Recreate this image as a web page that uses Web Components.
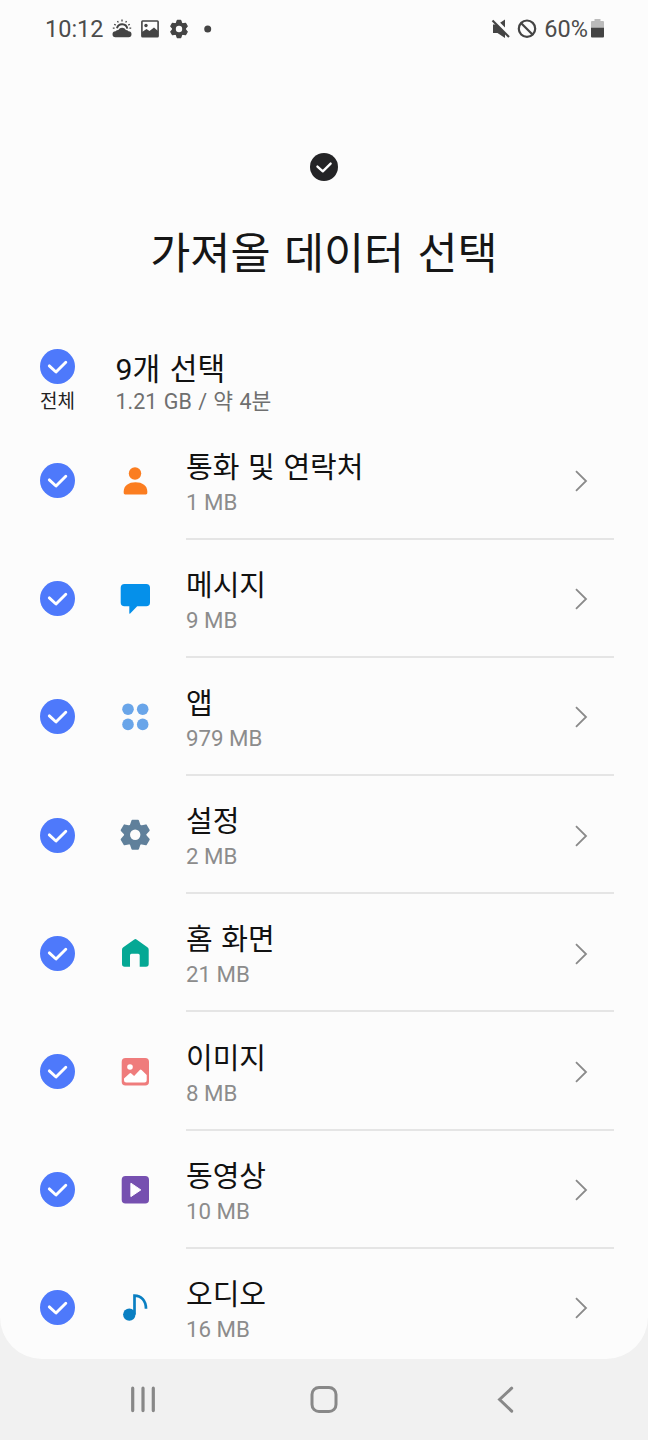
<!DOCTYPE html>
<html lang="ko">
<head>
<meta charset="utf-8">
<title>가져올 데이터 선택</title>
<style>
html, body { margin: 0; height: 100%; }
body { background: #f1f1f1; font-family: Roboto, "Noto Sans CJK KR", sans-serif; font-weight: 400; overflow: hidden; }
</style>
</head>
<body>
<transfer-screen></transfer-screen>
<script>
function define(name, render) {
  customElements.define(name, class extends HTMLElement {
    connectedCallback() {
      if (this.shadowRoot) return;
      this.attachShadow({ mode: 'open' }).innerHTML = render(this);
    }
  });
}

// Six-tooth gear centred on the origin, 30 units tall.
const TOOTH = 'M-2.800-14h5.600l1.700 5v18l-1.700 5h-5.600l-1.700-5v-18z';
const gear = color => `<g fill="${color}" stroke="${color}" stroke-width="2" stroke-linejoin="round"><circle r="10"/>
<path d="${TOOTH}"/><path d="${TOOTH}" transform="rotate(60)"/><path d="${TOOTH}" transform="rotate(120)"/></g><circle r="5.200" fill="#fcfcfc"/>`;

const ICONS = {
  contacts: '<g fill="#fb7d20"><circle cx="18" cy="10.5" r="6.2"/><path d="M6.7 30v-1.6C6.7 22.600 11.600 19.200 18.500 19.200S30.300 22.600 30.300 28.400V30q0 1.400-1.500 1.400H8.200q-1.500 0-1.500-1.400z"/></g>',
  messages: '<path fill="#0590ea" d="M7.500 3h21.700q3.800 0 3.800 3.800v14.700q0 3.800-3.800 3.800H20.200l-7 7.100q-.9.700-.9-.5v-6.600H7.500q-3.800 0-3.800-3.800V6.800Q3.700 3 7.500 3z"/>',
  apps: '<g fill="#69a5e9"><circle cx="11" cy="10.200" r="5.800"/><circle cx="25.700" cy="10.200" r="5.800"/><circle cx="11" cy="25.400" r="5.800"/><circle cx="25.700" cy="25.400" r="5.800"/></g>',
  settings: '<g transform="translate(18.200 17.800)">' + gear('#60809b') + '</g>',
  home: '<path fill="#05a894" d="M17.300 4.500q1.100-.8 2.200 0L30.400 12.200q1.300.9 1.300 2.500V29q0 2.700-2.700 2.700h-6.300V20.200q0-1.500-1.500-1.500h-6.700q-1.500 0-1.500 1.500v11.500H7.700Q5 31.700 5 29V14.700q0-1.600 1.300-2.500z"/>',
  images: '<rect x="4.700" y="4.100" width="27.300" height="27.500" rx="3.800" fill="#ef7c7c"/><circle cx="13" cy="13" r="2.800" fill="#fff"/><path fill="#fff" d="M7 24.500l5.500-5q.9-.8 1.800 0l2.800 2.500 5.700-6q.9-.9 1.800 0l5.100 4.900v5.300q0 2.200-2.200 2.200H9.200Q7 28.400 7 26.200z"/>',
  video: '<rect x="4.700" y="4.100" width="27.300" height="27.500" rx="3.800" fill="#7650b0"/><path fill="#fff" stroke="#fff" stroke-linejoin="round" d="M13.900 11.200v13.400l9.900-6.700z"/>',
  audio: '<circle cx="12.300" cy="24.600" r="6.200" fill="#0a7fc2"/><path fill="none" stroke="#0a7fc2" stroke-width="2.700" d="M17.500 24.600V5.600c6.700 0 11.500 4.800 11.500 13.200"/>'
};

define('category-icon', el => `
<style>:host{display:block;width:36px;height:36px} svg{display:block}</style>
<svg width="36" height="36" viewBox="0 0 36 36">${ICONS[el.getAttribute('name')]}</svg>`);

define('round-check', () => `
<style>
:host{display:block;width:var(--check-size,35px);height:var(--check-size,35px)}
svg{display:block;width:100%;height:100%}
</style>
<svg viewBox="0 0 35 35"><circle cx="17.500" cy="17.500" r="17.500" fill="var(--check-color,#4e79fb)"/>
<path d="M9.300 16.900l6.700 6.100 9.800-9.800" fill="none" stroke="#fff" stroke-width="2.900" stroke-linecap="round" stroke-linejoin="round"/></svg>`);

define('status-bar', () => `
<style>
:host{display:flex;height:57px;box-sizing:border-box;padding:0 44px 0 45px;justify-content:space-between;align-items:center;color:#4c4c4c;font-size:23.500px;line-height:28px}
div{display:flex;align-items:center}
svg{display:block}
.time{width:59px}
.left svg{margin-left:8px}
</style>
<div class="left"><span class="time">10:12</span>
<svg width="20" height="20" viewBox="0 0 20 20" fill="#444"><path d="M3.500 18.200a3 3 0 0 1 0-6 4 4 0 0 1 2.800-1.200 4.300 4.300 0 0 1 7.600 0 4 4 0 0 1 2.600 1.200 3 3 0 0 1 0 6z"/><path d="M5 9.200a5.300 5.300 0 0 1 10.300.4" fill="none" stroke="#444" stroke-width="2"/><path d="M10 .6v1.800M5.500 2l.8 1.500M14.500 2l-.8 1.500M2.200 5.200l1.500.9M17.800 5.200l-1.500.9M.8 9.100h1.800M17.400 9.100h1.800" stroke="#444" stroke-width="1.300"/></svg>
<svg width="20" height="20" viewBox="0 0 20 20"><rect x="1.900" y="2" width="16.200" height="15.800" rx=".7" fill="none" stroke="#444" stroke-width="1.600"/><circle cx="6" cy="6.500" r="1.700" fill="#444"/><path fill="#444" d="M2 13l4.500-3 3 2 4.500-3.500 4 3.500V18H2z"/></svg>
<svg width="22" height="22" viewBox="-18 -18 36 36">${gear('#444')}</svg>
<svg width="20" height="8" viewBox="0 0 20 8"><circle cx="9.700" cy="4" r="3.500" fill="#444"/></svg>
</div>
<div>
<svg width="20" height="22" viewBox="0 0 20 22"><path fill="#444" d="M2 6.500h4.500L14 1.500v18.500l-7.500-5H2z"/><path d="M2.500 .5l17 17" stroke="#fcfcfc" stroke-width="3.500"/><path d="M1.500 2.500l16.500 16.500" stroke="#444" stroke-width="2.200"/></svg>
<svg style="margin-left:6px;margin-right:7px" width="20" height="20" viewBox="0 0 20 20"><path d="M4 4l12 12" stroke="#444" stroke-width="2.200"/><circle cx="10" cy="9.700" r="8.200" fill="none" stroke="#444" stroke-width="2.200"/></svg>
<span>60%</span>
<svg style="margin-left:3px" width="13" height="20" viewBox="0 0 13 20"><path fill="#bbb" d="M3.500 0h6v2H12q1 0 1 1v6H0V3q0-1 1-1h2.500z"/><path fill="#444" d="M0 8.700h13V17.500q0 1-1 1H1q-1 0-1-1z"/></svg>
</div>`);

define('screen-title', () => `
<style>
:host{display:flex;flex-direction:column;align-items:center;height:283.300px;box-sizing:border-box;padding-top:96px}
round-check{--check-size:28px;--check-color:#242426}
h1{margin:44px 0 0;font-size:43.600px;font-weight:inherit;line-height:60px;word-spacing:2.500px;color:#161616;white-space:nowrap}
</style>
<round-check></round-check><h1><slot></slot></h1>`);

define('select-all', () => `
<style>
:host{display:grid;grid-template-columns:75.500px 1fr;height:81.200px;box-sizing:border-box;padding:9px 34px 0 40px}
.all{display:flex;flex-direction:column;align-items:flex-start}
.all span{font-size:19px;line-height:24px;margin-top:6px;color:#222;white-space:nowrap}
.title{font-size:30.200px;line-height:36px;word-spacing:2px;color:#111;margin-top:3px}
.sub{font-size:21.500px;line-height:26px;word-spacing:1px;color:#6f6f6f;margin-top:.5px}
</style>
<div class="all"><round-check></round-check><span>전체</span></div>
<div><div class="title"><slot name="title"></slot></div><div class="sub"><slot name="sub"></slot></div></div>`);

define('data-row', el => `
<style>
:host{display:grid;grid-template-columns:77px 69px 1fr;height:118.200px;box-sizing:border-box;padding:0 34px 0 40px;align-items:center}
.body{display:flex;align-items:center;justify-content:space-between;height:100%;box-sizing:border-box;border-bottom:2px solid #e5e5e5;padding-right:23px}
:host([last]) .body{border-color:transparent}
.text{padding-top:6px}
.name{font-size:29px;line-height:36px;word-spacing:1.500px;color:#111}
.size{font-size:22.300px;line-height:28px;color:#8c8c8c;margin-top:2px}
svg{display:block;margin-top:3px}
</style>
<round-check></round-check>
<category-icon name="${el.getAttribute('icon')}"></category-icon>
<div class="body"><div class="text"><div class="name"><slot></slot></div><div class="size">${el.getAttribute('size')}</div></div>
<svg width="20" height="24" viewBox="0 0 20 24"><path d="M5 2.200l10 9.800-10 9.800" fill="none" stroke="#8a8a8a" stroke-width="1.800"/></svg></div>`);

define('nav-bar', () => `
<style>
:host{display:grid;grid-template-columns:repeat(3,181.500px);justify-content:center;align-items:center;justify-items:center;height:81.500px}
svg{display:block;fill:none;stroke:#888;stroke-linecap:round}
</style>
<svg width="30" height="30" viewBox="0 0 30 30" stroke-width="3.200"><path d="M4.700 4.200v22.400M15 4.200v22.400M25.300 4.200v22.400"/></svg>
<svg width="30" height="30" viewBox="0 0 30 30" stroke-width="3"><rect x="3" y="3.500" width="24" height="24" rx="7"/></svg>
<svg width="30" height="30" viewBox="0 0 30 30" stroke-width="3"><path d="M20.700 4.200L8.600 15.500l12.100 11.600"/></svg>`);

define('transfer-screen', () => `
<style>
:host{display:flex;flex-direction:column;height:1440px;width:648px}
main{height:1358.500px;background:#fcfcfc;border-radius:0 0 42px 42px;overflow:hidden;flex:none}
</style>
<main>
<status-bar></status-bar>
<screen-title>가져올 데이터 선택</screen-title>
<select-all><span slot="title">9개 선택</span><span slot="sub">1.21 GB / 약 4분</span></select-all>
<data-row icon="contacts" size="1 MB">통화 및 연락처</data-row>
<data-row icon="messages" size="9 MB">메시지</data-row>
<data-row icon="apps" size="979 MB">앱</data-row>
<data-row icon="settings" size="2 MB">설정</data-row>
<data-row icon="home" size="21 MB">홈 화면</data-row>
<data-row icon="images" size="8 MB">이미지</data-row>
<data-row icon="video" size="10 MB">동영상</data-row>
<data-row icon="audio" size="16 MB" last>오디오</data-row>
</main>
<nav-bar></nav-bar>`);
</script>
</body>
</html>
